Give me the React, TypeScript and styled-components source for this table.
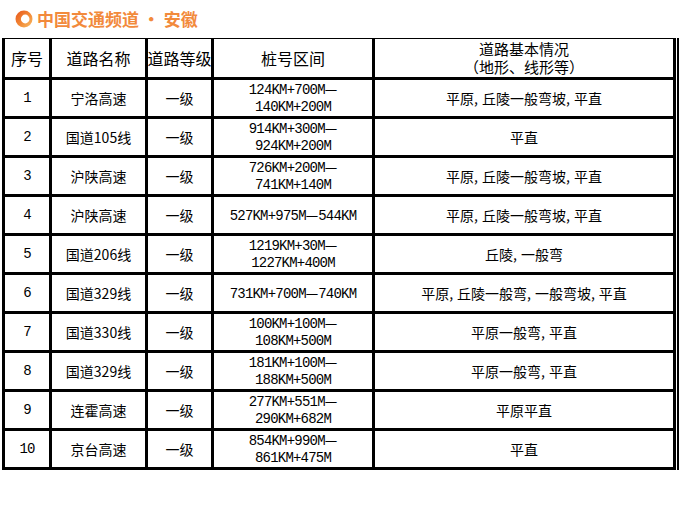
import { FC, Fragment } from 'react'
import styled, { createGlobalStyle } from 'styled-components'

type Row = {
  no: string
  road: string
  grade: string
  range: string[]
  terrain: string
}

const rows: Row[] = [
  { no: '1', road: '宁洛高速', grade: '一级', range: ['124KM+700M—', '140KM+200M'], terrain: '平原,丘陵一般弯坡,平直' },
  { no: '2', road: '国道105线', grade: '一级', range: ['914KM+300M—', '924KM+200M'], terrain: '平直' },
  { no: '3', road: '沪陕高速', grade: '一级', range: ['726KM+200M—', '741KM+140M'], terrain: '平原,丘陵一般弯坡,平直' },
  { no: '4', road: '沪陕高速', grade: '一级', range: ['527KM+975M—544KM'], terrain: '平原,丘陵一般弯坡,平直' },
  { no: '5', road: '国道206线', grade: '一级', range: ['1219KM+30M—', '1227KM+400M'], terrain: '丘陵,一般弯' },
  { no: '6', road: '国道329线', grade: '一级', range: ['731KM+700M—740KM'], terrain: '平原,丘陵一般弯,一般弯坡,平直' },
  { no: '7', road: '国道330线', grade: '一级', range: ['100KM+100M—', '108KM+500M'], terrain: '平原一般弯,平直' },
  { no: '8', road: '国道329线', grade: '一级', range: ['181KM+100M—', '188KM+500M'], terrain: '平原一般弯,平直' },
  { no: '9', road: '连霍高速', grade: '一级', range: ['277KM+551M—', '290KM+682M'], terrain: '平原平直' },
  { no: '10', road: '京台高速', grade: '一级', range: ['854KM+990M—', '861KM+475M'], terrain: '平直' },
]

// the dash in the mileage text is full width in the original, so it gets the CJK font
const RangeLine: FC<{ text: string }> = ({ text }) => {
  const parts = text.split('—')
  return (
    <span>
      {parts.map((p, i) => (
        <Fragment key={i}>
          {p}
          {i < parts.length - 1 && <Dash>—</Dash>}
        </Fragment>
      ))}
    </span>
  )
}

const Terrain: FC<{ text: string }> = ({ text }) => {
  const parts = text.split(',')
  return (
    <span>
      {parts.map((p, i) => (
        <Fragment key={i}>
          {p}
          {i < parts.length - 1 && <Comma>,</Comma>}
        </Fragment>
      ))}
    </span>
  )
}

const BrandMark: FC = () => (
  <svg width="18" height="18" viewBox="0 0 18 18">
    <defs>
      <linearGradient id="ring" x1="0" y1="0" x2="1" y2="1">
        <stop offset="0" stopColor="#e8561c" />
        <stop offset="0.55" stopColor="#f28a36" />
        <stop offset="1" stopColor="#f8c06a" />
      </linearGradient>
    </defs>
    <path
      fillRule="evenodd"
      fill="url(#ring)"
      d="M9 0.5a8.5 8.5 0 1 0 0 17a8.5 8.5 0 1 0 0-17zM10.2 4.6a4.3 4.4 0 1 0 0 8.8a4.3 4.4 0 1 0 0-8.8z"
    />
  </svg>
)

const App: FC = () => {
  return (
    <Page>
      <GlobalStyle />
      <Brand>
        <BrandMark />
        <BrandName>中国交通频道 · 安徽</BrandName>
      </Brand>
      <Frame>
        <Grid>
          <HeadCell>序号</HeadCell>
          <HeadCell>道路名称</HeadCell>
          <HeadCell>道路等级</HeadCell>
          <HeadCell>桩号区间</HeadCell>
          <HeadCell $small>
            <span>道路基本情况</span>
            <span>（地形、线形等）</span>
          </HeadCell>
          {rows.map(r => (
            <RowGroup key={r.no}>
              <Cell $mono>{r.no}</Cell>
              <Cell>{r.road}</Cell>
              <Cell>{r.grade}</Cell>
              <Cell $mono>
                {r.range.map(line => (
                  <RangeLine key={line} text={line} />
                ))}
              </Cell>
              <Cell>
                <Terrain text={r.terrain} />
              </Cell>
            </RowGroup>
          ))}
        </Grid>
      </Frame>
    </Page>
  )
}

export default App

const GlobalStyle = createGlobalStyle`
  html, body {
    margin: 0;
    padding: 0;
    background: #fff;
  }
  body {
    font-family: 'Noto Sans CJK SC', 'Noto Sans', sans-serif;
    color: #000;
  }
`
const Page = styled.div`
  width: 680px;
  height: 510px;
  overflow: hidden;
`
const Brand = styled.div`
  height: 38px;
  box-sizing: border-box;
  padding: 10px 0 0 15px;
  display: flex;
  align-items: flex-start;
  gap: 4px;
`
const BrandName = styled.span`
  font-size: 17px;
  line-height: 18px;
  font-weight: 700;
  color: #f28a3c;
`
const Frame = styled.div`
  margin-left: 2px;
  width: fit-content;
  padding-right: 1px;
  border-right: 2px solid #000;
`
const Grid = styled.div`
  display: grid;
  grid-template-columns: 44px 93px 63px 158px 298px;
  grid-template-rows: 38px repeat(10, 36px);
  gap: 3px;
  padding: 1px 3px 3px 3px;
  background: #000;
`
const RowGroup = styled.div`
  display: contents;
`
const HeadCell = styled.div<{ $small?: boolean }>`
  background: #fff;
  display: flex;
  flex-direction: column;
  align-items: center;
  justify-content: center;
  font-size: ${p => (p.$small ? '15px' : '16px')};
  line-height: 18px;
  white-space: nowrap;
`
const Cell = styled.div<{ $mono?: boolean }>`
  background: #fff;
  display: flex;
  flex-direction: column;
  align-items: center;
  justify-content: center;
  white-space: nowrap;
  font-size: 14px;
  line-height: 17px;
  ${p =>
    p.$mono &&
    `
    font-family: 'Liberation Mono', 'Noto Sans CJK SC', monospace;
    font-size: 14px;
    letter-spacing: -0.8px;
  `}
`
const Dash = styled.span`
  font-family: 'Noto Sans CJK SC', sans-serif;
  letter-spacing: 0;
`
const Comma = styled.span`
  margin-right: 4px;
`
